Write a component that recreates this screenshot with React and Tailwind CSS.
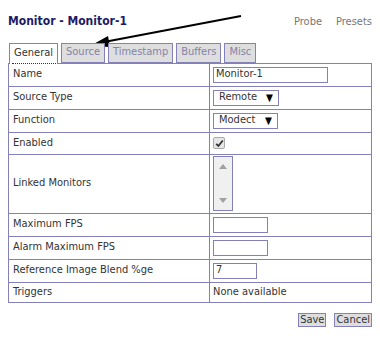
import React from "react";

const B = "border-[#8480b8]";

function Row({ label, h = "h-[23px]", children }) {
  return (
    <tr className={h}>
      <td className={`border ${B} pl-[4px] w-[201px] align-middle`}>{label}</td>
      <td className={`border ${B} pl-[3px] align-middle`}>{children}</td>
    </tr>
  );
}

function Select({ value, w }) {
  return (
    <div className={`border ${B} h-[16px] ${w} flex items-center justify-between pl-[5px] pr-[5px] text-[#333]`}>
      <span>{value}</span>
      <span className="text-[10px] text-black">▼</span>
    </div>
  );
}

export default function App() {
  return (
    <div
      className="relative w-[380px] h-[364px] bg-white text-[11px] text-[#333] overflow-hidden"
      style={{ fontFamily: '"DejaVu Sans Condensed", "DejaVu Sans", Verdana, sans-serif' }}
    >
      <div className="flex justify-between items-baseline pl-[8px] pr-[8px] pt-[12px]">
        <div className="text-[12px] font-bold text-[#1c1c66]">Monitor - Monitor-1</div>
        <div className="flex gap-[14px] text-[#777]">
          <span>Probe</span>
          <span>Presets</span>
        </div>
      </div>

      <div className="flex gap-[3px] ml-[9px] mt-[12px] relative z-10 -mb-px">
        <div className={`border ${B} border-b-0 h-[21px] px-[4px] bg-white text-[#333] flex items-center relative`}>
          General
          <div className="absolute left-[2px] right-[1px] bottom-0 border-b border-dotted border-[#333]" />
        </div>
        {["Source", "Timestamp", "Buffers", "Misc"].map((t) => (
          <div key={t} className={`border ${B} h-[20px] px-[4px] bg-[#dedede] text-[#8482a8] flex items-center`}>
            {t}
          </div>
        ))}
      </div>

      <table className={`ml-[8px] w-[364px] border-collapse border ${B}`}>
        <tbody>
          <Row label="Name">
            <div className={`border ${B} h-[16px] w-[115px] flex items-center pl-[2px]`}>Monitor-1</div>
          </Row>
          <Row label="Source Type">
            <Select value="Remote" w="w-[66px]" />
          </Row>
          <Row label="Function">
            <Select value="Modect" w="w-[65px]" />
          </Row>
          <Row label="Enabled" h="h-[22px]">
            <div className="w-[12px] h-[12px] rounded-[2px] border border-[#aaa] bg-[#e6e6e6] flex items-center justify-center">
              <svg width="9" height="9" viewBox="0 0 9 9">
                <path d="M1.2 4.8 L3.4 7 L7.8 1.5" stroke="#333" strokeWidth="1.8" fill="none" />
              </svg>
            </div>
          </Row>
          <Row label="Linked Monitors" h="h-[59px]">
            <div className={`border ${B} w-[20px] h-[55px] bg-[#f0f0f0] flex flex-col items-center justify-between py-[7px]`}>
              <svg width="8" height="5" viewBox="0 0 8 5"><path d="M0 5 L4 0 L8 5 Z" fill="#a0a0a0" /></svg>
              <svg width="8" height="5" viewBox="0 0 8 5"><path d="M0 0 L4 5 L8 0 Z" fill="#a0a0a0" /></svg>
            </div>
          </Row>
          <Row label="Maximum FPS">
            <div className={`border ${B} h-[16px] w-[55px]`} />
          </Row>
          <Row label="Alarm Maximum FPS">
            <div className={`border ${B} h-[16px] w-[55px]`} />
          </Row>
          <Row label="Reference Image Blend %ge">
            <div className={`border ${B} h-[16px] w-[44px] flex items-center pl-[2px]`}>7</div>
          </Row>
          <Row label="Triggers" h="h-[20px]">
            None available
          </Row>
        </tbody>
      </table>

      <div className="flex justify-end gap-[8px] pr-[8px] mt-[10px]">
        <button className={`border ${B} bg-[#dedede] h-[14px] px-[1px] leading-none text-[#333] text-[11px]`}>Save</button>
        <button className={`border ${B} bg-[#dedede] h-[14px] px-[1px] leading-none text-[#333] text-[11px]`}>Cancel</button>
      </div>

      <svg className="absolute left-0 top-0 pointer-events-none" width="380" height="364">
        <line x1="241" y1="16" x2="104" y2="42" stroke="#000" strokeWidth="2" />
        <path d="M90 46 L108 36 L110 47 Z" fill="#000" />
      </svg>
    </div>
  );
}
